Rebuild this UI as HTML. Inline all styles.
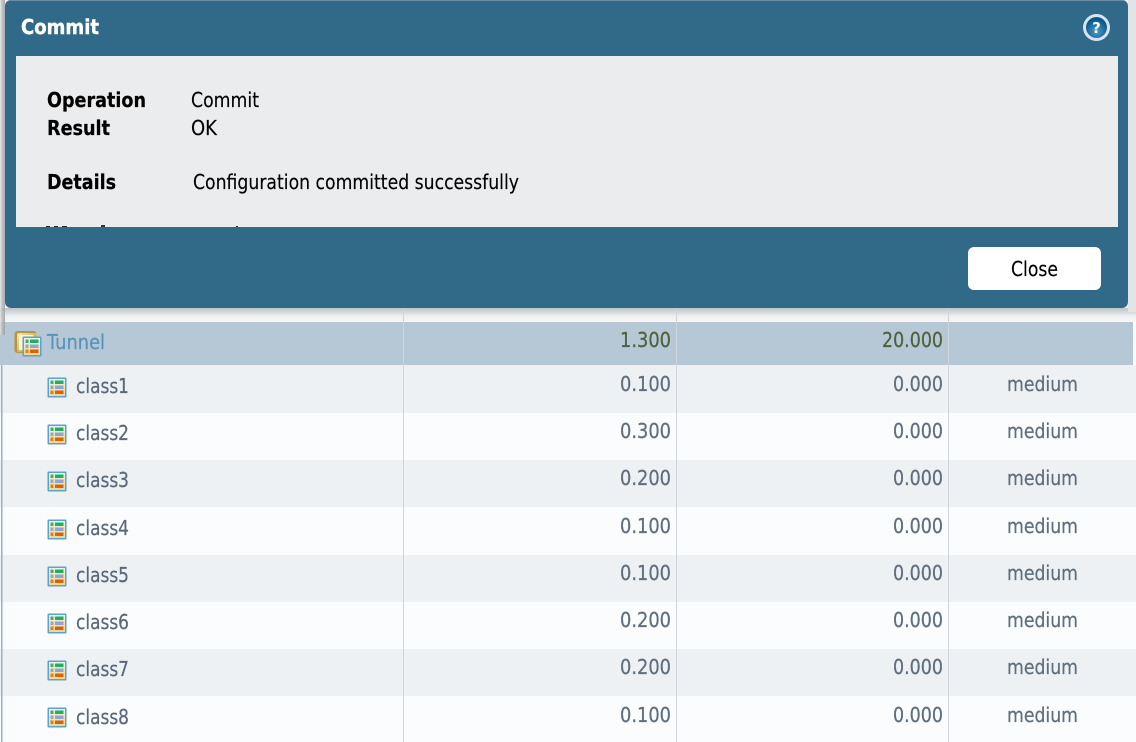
<!DOCTYPE html>
<html>
<head>
<meta charset="utf-8">
<style>
html,body{margin:0;padding:0;background:#fff;width:1136px;height:742px;overflow:hidden}
svg{display:block}
text{font-family:"DejaVu Sans","Liberation Sans",sans-serif;font-size:20.5px}
.b{font-weight:bold;fill:#000;stroke:#000;stroke-width:.2px}
.k{fill:#000;stroke:#000;stroke-width:.15px}
.c{fill:#5a6979;stroke:#5a6979;stroke-width:.25px}
.n{fill:#5f6e7d;stroke:#5f6e7d;stroke-width:.25px}
.g{fill:#4f6139;stroke:#4f6139;stroke-width:.25px}
</style>
</head>
<body>
<svg width="1136" height="742" viewBox="0 0 1136 742" xmlns="http://www.w3.org/2000/svg">
<defs>
<linearGradient id="sh" x1="0" y1="0" x2="0" y2="1"><stop offset="0" stop-color="#bfc3c6"/><stop offset=".6" stop-color="#eef0f1"/><stop offset="1" stop-color="#f6f7f8"/></linearGradient>
<linearGradient id="lf" x1="0" y1="0" x2="1" y2="0"><stop offset="0" stop-color="#e4e6e8"/><stop offset=".4" stop-color="#b9bdc0"/><stop offset="1" stop-color="#9aa1a6"/></linearGradient>
<radialGradient id="hb" cx="50%" cy="70%" r="60%"><stop offset="0" stop-color="#4b9bcb"/><stop offset="1" stop-color="#0a5686"/></radialGradient>
<linearGradient id="ib" x1="0" y1="0" x2="0" y2="1"><stop offset="0" stop-color="#f2f3e6"/><stop offset="1" stop-color="#f2d68c"/></linearGradient>
<linearGradient id="fd" x1="0" y1="0" x2="1" y2="1"><stop offset="0" stop-color="#f4e6ae"/><stop offset="1" stop-color="#b8923a"/></linearGradient>
<g id="ic">
<rect x="0.500" y="0.500" width="19" height="20" fill="#5aa2cf" rx="1"/>
<rect x="2" y="2" width="16" height="17" fill="url(#ib)"/>
<rect x="3.500" y="3.500" width="3" height="3.500" fill="#3fae74"/><rect x="8" y="3.500" width="8.500" height="3.500" fill="#1fae62"/>
<rect x="3.500" y="8.500" width="3" height="3.500" fill="#93a8c6"/><rect x="8" y="8.500" width="8.500" height="3.500" fill="#8ea6d0"/>
<rect x="3.500" y="13.500" width="3" height="3.500" fill="#dd7e28"/><rect x="8" y="13.500" width="8.500" height="3.500" fill="#d4640f"/>
</g>
</defs>

<!-- page background / grid -->
<rect width="1136" height="742" fill="#fbfcfd"/>
<rect x="0" y="0" width="1136" height="322" fill="#f2f3f4"/>
<rect x="0" y="308" width="1136" height="14" fill="url(#sh)"/>
<rect x="0" y="322" width="1133" height="43" fill="#b6c7d6"/>
<rect x="0" y="365" width="1136" height="48" fill="#eef1f4"/>
<rect x="0" y="460" width="1136" height="47" fill="#eef1f4"/>
<rect x="0" y="555" width="1136" height="47" fill="#eef1f4"/>
<rect x="0" y="649" width="1136" height="47" fill="#eef1f4"/>
<rect x="1" y="365" width="1.500" height="377" fill="#8fb4d0"/>
<rect x="403" y="308" width="1" height="434" fill="#cfd5da"/>
<rect x="676" y="308" width="1" height="434" fill="#cfd5da"/>
<rect x="948" y="308" width="1" height="434" fill="#cfd5da"/>

<!-- dialog -->
<rect x="0" y="0" width="5" height="335" fill="url(#lf)" opacity=".85"/>
<rect x="1128" y="0" width="8" height="312" fill="#e2e4e5"/>
<rect x="5" y="0" width="1123" height="308" rx="6" fill="#316a89"/>
<rect x="10" y="0" width="1113" height="1" fill="#6a8ea3"/>
<rect x="16" y="56" width="1102" height="171" fill="#ebecee"/>
<text x="21" y="34" style="fill:#fff;stroke:#fff;stroke-width:.4px;font-weight:bold" textLength="78" lengthAdjust="spacingAndGlyphs">Commit</text>

<circle cx="1096.500" cy="27.500" r="13.500" fill="#d5e6f0"/>
<circle cx="1096.500" cy="27.500" r="10.500" fill="url(#hb)"/>
<text x="1096.500" y="33" text-anchor="middle" style="font-size:15px;font-weight:bold;fill:#fff">?</text>

<text class="b" x="47" y="107" textLength="99" lengthAdjust="spacingAndGlyphs">Operation</text>
<text class="b" x="47" y="135" textLength="63" lengthAdjust="spacingAndGlyphs">Result</text>
<text class="b" x="47" y="189" textLength="69" lengthAdjust="spacingAndGlyphs">Details</text>
<text class="k" x="191" y="107" textLength="68" lengthAdjust="spacingAndGlyphs">Commit</text>
<text class="k" x="191" y="135" textLength="26" lengthAdjust="spacingAndGlyphs">OK</text>
<text class="k" x="193" y="189" textLength="326" lengthAdjust="spacingAndGlyphs">Configuration committed successfully</text>

<!-- clipped next row -->
<rect x="46" y="226" width="4" height="1" fill="#222"/>
<rect x="54" y="226" width="4" height="1" fill="#222"/>
<rect x="62" y="226" width="5" height="1" fill="#222"/>
<rect x="101" y="225" width="4" height="2" fill="#333"/>
<rect x="236" y="226" width="2" height="1" fill="#333"/>

<rect x="968" y="247" width="133" height="43" rx="6" fill="#fff"/>
<text class="k" x="1011" y="276" textLength="47" lengthAdjust="spacingAndGlyphs">Close</text>

<!-- tunnel row -->
<rect x="14.500" y="331" width="22" height="22" rx="3" fill="#b8963a"/>
<rect x="17" y="333" width="20" height="19" rx="2" fill="url(#fd)"/>
<rect x="19" y="335" width="14" height="15" fill="#fbf4d6"/>
<use href="#ic" x="22" y="336"/>
<text x="47" y="349" style="fill:#5694b9;stroke:#5694b9;stroke-width:.25px" textLength="58" lengthAdjust="spacingAndGlyphs">Tunnel</text>
<text class="g" x="620" y="347" textLength="51" lengthAdjust="spacingAndGlyphs">1.300</text>
<text class="g" x="882" y="347" textLength="61" lengthAdjust="spacingAndGlyphs">20.000</text>

<!-- rows -->
<use href="#ic" x="47" y="377"/>
<text class="c" x="76" y="393" textLength="53" lengthAdjust="spacingAndGlyphs">class1</text>
<text class="n" x="620" y="391" textLength="51" lengthAdjust="spacingAndGlyphs">0.100</text>
<text class="n" x="893" y="391" textLength="50" lengthAdjust="spacingAndGlyphs">0.000</text>
<text class="n" x="1007" y="391" textLength="71" lengthAdjust="spacingAndGlyphs">medium</text>

<use href="#ic" x="47" y="424"/>
<text class="c" x="76" y="440" textLength="53" lengthAdjust="spacingAndGlyphs">class2</text>
<text class="n" x="620" y="438" textLength="51" lengthAdjust="spacingAndGlyphs">0.300</text>
<text class="n" x="893" y="438" textLength="50" lengthAdjust="spacingAndGlyphs">0.000</text>
<text class="n" x="1007" y="438" textLength="71" lengthAdjust="spacingAndGlyphs">medium</text>

<use href="#ic" x="47" y="471"/>
<text class="c" x="76" y="487" textLength="53" lengthAdjust="spacingAndGlyphs">class3</text>
<text class="n" x="620" y="485" textLength="51" lengthAdjust="spacingAndGlyphs">0.200</text>
<text class="n" x="893" y="485" textLength="50" lengthAdjust="spacingAndGlyphs">0.000</text>
<text class="n" x="1007" y="485" textLength="71" lengthAdjust="spacingAndGlyphs">medium</text>

<use href="#ic" x="47" y="519"/>
<text class="c" x="76" y="535" textLength="53" lengthAdjust="spacingAndGlyphs">class4</text>
<text class="n" x="620" y="533" textLength="51" lengthAdjust="spacingAndGlyphs">0.100</text>
<text class="n" x="893" y="533" textLength="50" lengthAdjust="spacingAndGlyphs">0.000</text>
<text class="n" x="1007" y="533" textLength="71" lengthAdjust="spacingAndGlyphs">medium</text>

<use href="#ic" x="47" y="566"/>
<text class="c" x="76" y="582" textLength="53" lengthAdjust="spacingAndGlyphs">class5</text>
<text class="n" x="620" y="580" textLength="51" lengthAdjust="spacingAndGlyphs">0.100</text>
<text class="n" x="893" y="580" textLength="50" lengthAdjust="spacingAndGlyphs">0.000</text>
<text class="n" x="1007" y="580" textLength="71" lengthAdjust="spacingAndGlyphs">medium</text>

<use href="#ic" x="47" y="613"/>
<text class="c" x="76" y="629" textLength="53" lengthAdjust="spacingAndGlyphs">class6</text>
<text class="n" x="620" y="627" textLength="51" lengthAdjust="spacingAndGlyphs">0.200</text>
<text class="n" x="893" y="627" textLength="50" lengthAdjust="spacingAndGlyphs">0.000</text>
<text class="n" x="1007" y="627" textLength="71" lengthAdjust="spacingAndGlyphs">medium</text>

<use href="#ic" x="47" y="660"/>
<text class="c" x="76" y="676" textLength="53" lengthAdjust="spacingAndGlyphs">class7</text>
<text class="n" x="620" y="674" textLength="51" lengthAdjust="spacingAndGlyphs">0.200</text>
<text class="n" x="893" y="674" textLength="50" lengthAdjust="spacingAndGlyphs">0.000</text>
<text class="n" x="1007" y="674" textLength="71" lengthAdjust="spacingAndGlyphs">medium</text>

<use href="#ic" x="47" y="707"/>
<text class="c" x="76" y="724" textLength="53" lengthAdjust="spacingAndGlyphs">class8</text>
<text class="n" x="620" y="722" textLength="51" lengthAdjust="spacingAndGlyphs">0.100</text>
<text class="n" x="893" y="722" textLength="50" lengthAdjust="spacingAndGlyphs">0.000</text>
<text class="n" x="1007" y="722" textLength="71" lengthAdjust="spacingAndGlyphs">medium</text>
</svg>
</body>
</html>
